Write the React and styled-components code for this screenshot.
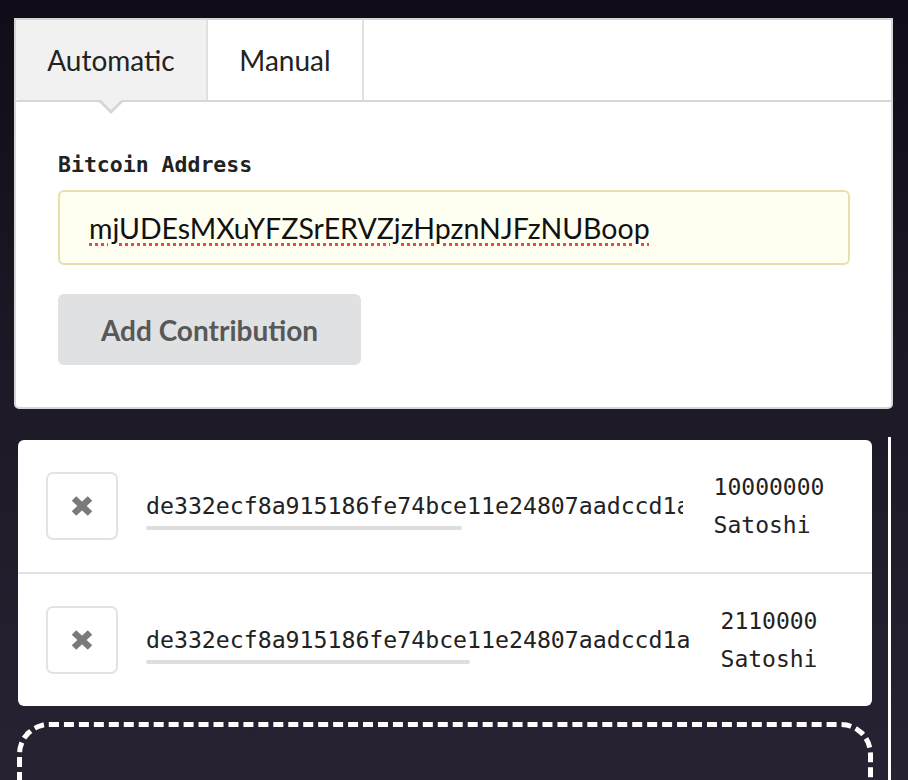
import React from 'react';
import styled, { createGlobalStyle } from 'styled-components';

const GlobalStyle = createGlobalStyle`
  html, body {
    margin: 0;
    padding: 0;
  }
  body {
    min-height: 100vh;
    background: linear-gradient(180deg, #100d18 0%, #1d1926 45%, #2a2535 100%);
    font-family: Lato, "Open Sans", sans-serif;
    overflow: hidden;
  }
`;

const Page = styled.div`
  padding: 18px 15px 0 14px;
`;

const Panel = styled.div`
  background: #fff;
  border: 2px solid #d6d6d6;
  border-radius: 0 0 5px 5px;
`;

const TabBar = styled.div`
  display: flex;
  height: 80px;
  border-bottom: 2px solid #d6d6d6;
`;

const Tab = styled.div`
  position: relative;
  display: flex;
  align-items: center;
  justify-content: center;
  width: ${(props) => props.width}px;
  box-sizing: border-box;
  border-right: 2px solid #e0e0e0;
  background: ${(props) => (props.active ? '#f1f1f1' : '#fff')};
  border-bottom-left-radius: ${(props) => (props.active ? '4px' : '0')};
  font-size: 28px;
  color: #222;

  ${(props) => props.active && `
    &::before {
      content: '';
      position: absolute;
      left: 50%;
      bottom: -14px;
      margin-left: -12px;
      border: 12px solid transparent;
      border-top-color: #d6d6d6;
      border-bottom-width: 0;
      z-index: 1;
    }
    &::after {
      content: '';
      position: absolute;
      left: 50%;
      bottom: -10px;
      margin-left: -10px;
      border: 10px solid transparent;
      border-top-color: #f1f1f1;
      border-bottom-width: 0;
      z-index: 2;
    }
  `}
`;

const Body = styled.div`
  padding: 50px 41px 42px 42px;
`;

const Label = styled.div`
  font-family: "DejaVu Sans Mono", "Liberation Mono", monospace;
  font-weight: bold;
  font-size: 21.5px;
  line-height: 26px;
  color: #222;
`;

const Field = styled.div`
  margin-top: 12px;
  height: 75px;
  box-sizing: border-box;
  display: flex;
  align-items: center;
  padding: 0 29px;
  background: #fefef1;
  border: 2px solid #e6e1a6;
  border-radius: 6px;
  font-size: 28.5px;
  color: #111;
`;

const Misspelt = styled.span`
  text-decoration: underline dotted #ec4848;
  text-decoration-thickness: 3px;
  text-underline-offset: 4px;
`;

const Button = styled.button`
  display: block;
  margin-top: 29px;
  width: 303px;
  height: 71px;
  border: none;
  border-radius: 6px;
  background: #e0e1e3;
  color: #585858;
  font-family: Lato, "Open Sans", sans-serif;
  font-weight: bold;
  font-size: 28px;
  padding: 0;
`;

const Lower = styled.div`
  margin-top: 28px;
  padding: 3px 16px 0 4px;
  border-right: 3px solid #fff;
  margin-right: 2px;
`;

const List = styled.div`
  background: #fff;
  border-radius: 6px;
`;

const Row = styled.div`
  display: flex;
  align-items: center;
  padding: 0 38px 0 28px;
  border-top: ${(props) => (props.first ? 'none' : '2px solid #e2e2e2')};
  box-sizing: border-box;
  height: ${(props) => (props.first ? '132px' : '134px')};
`;

const DeleteButton = styled.div`
  flex: none;
  width: 72px;
  height: 68px;
  box-sizing: border-box;
  display: flex;
  align-items: center;
  justify-content: center;
  border: 2px solid #e3e3e3;
  border-radius: 7px;
  background: #fff;
`;

const Hash = styled.div`
  flex: none;
  width: ${(props) => props.width}px;
  margin-left: 28px;
  margin-right: ${(props) => 544 - props.width}px;
  padding-top: 10px;
`;

const HashText = styled.div`
  overflow: hidden;
  white-space: nowrap;
  font-family: "DejaVu Sans Mono", "Liberation Mono", monospace;
  font-size: 23.2px;
  line-height: 28px;
  color: #222;
`;

const ScrollThumb = styled.div`
  margin-top: 6px;
  height: 4px;
  border-radius: 2px;
  background: #dedede;
`;

const Amount = styled.div`
  flex: none;
  width: 130px;
  margin-left: 14px;
  display: flex;
  justify-content: center;
  font-family: "DejaVu Sans Mono", "Liberation Mono", monospace;
  font-size: 23px;
  line-height: 38px;
  color: #222;
`;

const DropZone = styled.div`
  margin: 16px -1px 0 -1px;
  height: 140px;
  border: 5px dashed #fff;
  border-radius: 32px;
`;

const CrossIcon = () => (
  <svg width="24" height="22" viewBox="0 0 24 22">
    <path d="M4 3.5 L20 18.5 M20 3.5 L4 18.5" stroke="#7a7a7a" strokeWidth="6.5" strokeLinecap="butt" />
  </svg>
);

const contributions = [
  { hash: 'de332ecf8a915186fe74bce11e24807aadccd1a5f0', width: 537, thumb: 316, amount: '10000000' },
  { hash: 'de332ecf8a915186fe74bce11e24807aadccd1a', width: 544, thumb: 324, amount: '2110000' },
];

export default function App() {
  return (
    <Page>
      <GlobalStyle />
      <Panel>
        <TabBar>
          <Tab active width={192}>Automatic</Tab>
          <Tab width={156}>Manual</Tab>
        </TabBar>
        <Body>
          <Label>Bitcoin Address</Label>
          <Field>
            <Misspelt>mjUDEsMXuYFZSrERVZjzHpznNJFzNUBoop</Misspelt>
          </Field>
          <Button>Add Contribution</Button>
        </Body>
      </Panel>
      <Lower>
        <List>
          {contributions.map((c, i) => (
            <Row key={c.amount} first={i === 0}>
              <DeleteButton>
                <CrossIcon />
              </DeleteButton>
              <Hash width={c.width}>
                <HashText>{c.hash}</HashText>
                <ScrollThumb style={{ width: c.thumb }} />
              </Hash>
              <Amount>
                <div>
                  {c.amount}
                  <br />
                  Satoshi
                </div>
              </Amount>
            </Row>
          ))}
        </List>
        <DropZone />
      </Lower>
    </Page>
  );
}
